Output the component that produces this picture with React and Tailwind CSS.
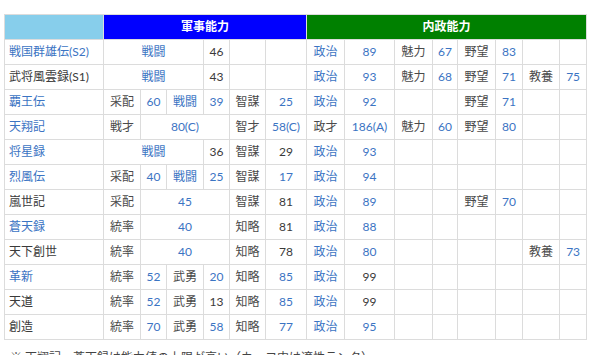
import React from 'react';

const B = 'b'; // link blue
const D = 'd'; // dark text
const G = 'g'; // gray label

// each cell: [text, tone, colSpan]
const rows = [
    [['戦国群雄伝(S2)', B], ['戦闘', B, 3], ['46', D], ['', D], ['', D], ['政治', B], ['89', B], ['魅力', G], ['67', B], ['野望', G], ['83', B], ['', D], ['', D]],
    [['武将風雲録(S1)', D], ['戦闘', B, 3], ['43', D], ['', D], ['', D], ['政治', B], ['93', B], ['魅力', G], ['68', B], ['野望', G], ['71', B], ['教養', G], ['75', B]],
    [['覇王伝', B], ['采配', G], ['60', B], ['戦闘', B], ['39', B], ['智謀', G], ['25', B], ['政治', B], ['92', B], ['', D], ['', D], ['野望', G], ['71', B], ['', D], ['', D]],
    [['天翔記', B], ['戦才', G], ['80(C)', B, 3], ['智才', G], ['58(C)', B], ['政才', G], ['186(A)', B], ['魅力', G], ['60', B], ['野望', G], ['80', B], ['', D], ['', D]],
    [['将星録', B], ['戦闘', B, 3], ['36', D], ['智謀', G], ['29', D], ['政治', B], ['93', B], ['', D], ['', D], ['', D], ['', D], ['', D], ['', D]],
    [['烈風伝', B], ['采配', G], ['40', B], ['戦闘', B], ['25', B], ['智謀', G], ['17', B], ['政治', B], ['94', B], ['', D], ['', D], ['', D], ['', D], ['', D], ['', D]],
    [['嵐世記', D], ['采配', G], ['45', B, 3], ['智謀', G], ['81', D], ['政治', B], ['89', B], ['', D], ['', D], ['野望', G], ['70', B], ['', D], ['', D]],
    [['蒼天録', B], ['統率', G], ['40', B, 3], ['知略', G], ['81', D], ['政治', B], ['88', B], ['', D], ['', D], ['', D], ['', D], ['', D], ['', D]],
    [['天下創世', D], ['統率', G], ['40', B, 3], ['知略', G], ['78', D], ['政治', B], ['80', B], ['', D], ['', D], ['', D], ['', D], ['教養', G], ['73', B]],
    [['革新', B], ['統率', G], ['52', B], ['武勇', G], ['20', B], ['知略', G], ['85', B], ['政治', B], ['99', D], ['', D], ['', D], ['', D], ['', D], ['', D], ['', D]],
    [['天道', D], ['統率', G], ['52', B], ['武勇', G], ['13', D], ['知略', G], ['85', B], ['政治', B], ['99', D], ['', D], ['', D], ['', D], ['', D], ['', D], ['', D]],
    [['創造', D], ['統率', G], ['70', B], ['武勇', G], ['58', B], ['知略', G], ['77', B], ['政治', B], ['95', B], ['', D], ['', D], ['', D], ['', D], ['', D], ['', D]],
];

const colWidths = ['w-[99px]', 'w-[37px]', 'w-[26px]', 'w-[37px]', 'w-[26px]', 'w-[36px]', 'w-[41px]', 'w-[38px]', 'w-[50px]', 'w-[38px]', 'w-[25px]', 'w-[38px]', 'w-[27px]', 'w-[37px]', 'w-[27px]'];

const toneClass = {
    b: 'text-[#3b74c3]',
    d: 'text-[#3a3a3a]',
    g: 'text-[#4a4a4a]',
};

export default function App() {
    return (
        <div className="w-[600px] h-[355px] overflow-hidden bg-white pt-[14px] pl-[4px] font-['Lato','Noto_Sans_CJK_JP',sans-serif] text-[12px] leading-none">
            <table className="table-fixed border-collapse w-[583px]">
                <colgroup>
                    {colWidths.map((w, i) => <col key={i} className={w} />)}
                </colgroup>
                <thead>
                    <tr className="h-[25px]">
                        <th className="border border-[#dcdcdc] bg-[#87ceeb] p-0"></th>
                        <th colSpan={6} className="border border-[#dcdcdc] bg-[#0000ff] p-0 text-white font-bold text-center">軍事能力</th>
                        <th colSpan={8} className="border border-[#dcdcdc] bg-[#008000] p-0 text-white font-bold text-center">内政能力</th>
                    </tr>
                </thead>
                <tbody>
                    {rows.map((row, ri) => (
                        <tr key={ri} className="h-[25px]">
                            {row.map(([text, tone, span], ci) => (
                                <td
                                    key={ci}
                                    colSpan={span || 1}
                                    className={`border border-[#dcdcdc] p-0 whitespace-nowrap ${toneClass[tone]} ${ci === 0 ? 'text-left pl-[4px]' : 'text-center'}`}
                                >
                                    {text}
                                </td>
                            ))}
                        </tr>
                    ))}
                </tbody>
            </table>
            <p className="mt-[12px] pl-[6px] text-[#444] text-[12px]">※ 天翔記・蒼天録は能力値の上限が高い（カッコ内は適性ランク）</p>
        </div>
    );
}
